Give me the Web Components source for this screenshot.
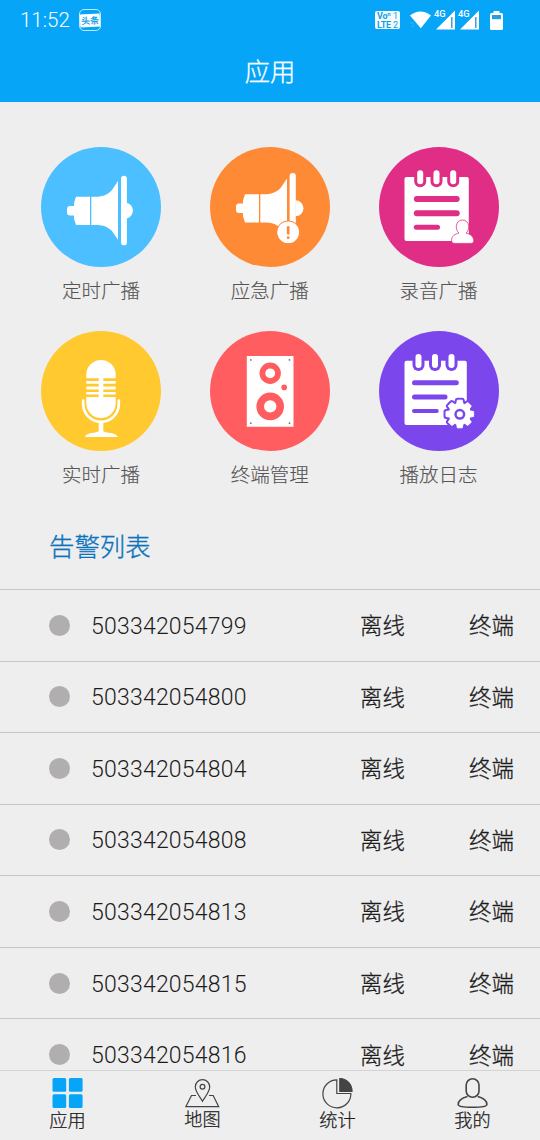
<!DOCTYPE html>
<html lang="zh-CN">
<head>
<meta charset="utf-8">
<title>应用</title>
<style>
html,body{margin:0;height:100%}
body{background:#efeeef;overflow:hidden;font-family:Roboto,"Noto Sans CJK SC",sans-serif;font-weight:300}
</style>
</head>
<body>
<broadcast-app></broadcast-app>
<script>
const define = (name, html, setup) => customElements.define(name, class extends HTMLElement {
  constructor() {
    super();
    const t = document.createElement('template');
    t.innerHTML = html;
    this.attachShadow({mode: 'open'}).append(t.content.cloneNode(true));
  }
  connectedCallback() { if (setup) setup(this, this.shadowRoot); }
});

const horn = `<path d="M35 49.7H49V78H35L33 71.5V68.5H29Q26 68.5 26 65.5V62Q26 59 29 59H33V56Z"/>
<path d="M50.3 49.7H57Q66 49 71 43L77 34V92.7L71 84Q65 78 57 78H50.3Z"/>`;
const rings = (xs, y) => xs.map(x =>
  `<rect x="${x-6}" y="${y-3}" width="12" height="20" rx="6" fill="var(--c)"/><rect x="${x-3}" y="${y}" width="6" height="14" rx="3"/>`).join('');
const rule = (x1, x2, y, w) => `<path d="M${x1+w/2} ${y}H${x2-w/2}" stroke="var(--c)" stroke-width="${w}" stroke-linecap="round"/>`;
const gearPath = (() => {
  let d = '';
  for (let i = 0; i < 8; i++) {
    [[-17,10.6],[-10,14],[10,14],[17,10.6]].forEach(([o, r], k) => {
      const a = (i*45 + o - 90) * Math.PI/180;
      d += (i||k ? 'L' : 'M') + (80.8 + r*Math.cos(a)).toFixed(2) + ' ' + (83 + r*Math.sin(a)).toFixed(2);
    });
  }
  return d + 'Z';
})();

const art = {
  timed: horn + `<rect x="80" y="28.7" width="5.9" height="69.6" rx="2.9"/><path d="M85.5 55.7A8.2 8.2 0 0 1 85.5 71.7Z"/>`,
  urgent: `<g transform="translate(0 -2.4)">${horn}<rect x="79.6" y="28.3" width="6.2" height="66" rx="3"/><path d="M85.5 55.7A8 8 0 0 1 85.5 71.7Z"/></g>
    <circle cx="78.2" cy="85.3" r="11.8" fill="var(--c)"/><circle cx="78.2" cy="85.3" r="10.9"/>
    <path d="M78.2 80.3V86.3" stroke="var(--c)" stroke-width="2.7" stroke-linecap="round"/><circle cx="78.2" cy="90.7" r="1.4" fill="var(--c)"/>
    <path d="M76 96.5H88V100H76Z" fill="var(--c)"/>`,
  record: `<rect x="25.5" y="30" width="64.3" height="64" rx="2"/>${rings([41.2,57.5,74.2],23.3)}
    ${rule(34.8,80.7,52,6)}${rule(34.8,80.7,66.3,6)}${rule(34.8,61,80.2,5)}
    <path d="M72.5 94C72.5 88.5 76 87.3 80 86C75.5 82.5 76.5 73 83.5 73S91.5 82.5 87 86C92 87.3 94.8 90 94.8 94Q94.8 96.4 92 96.4H75Q72.5 96.4 72.5 94Z" stroke="var(--c)" stroke-width=".8"/>`,
  live: `<path d="M45.3 47.3V43.7A14.7 14.7 0 0 1 74.7 43.7V47.3ZM45.3 66H74.7V72.3A14.7 14.7 0 0 1 45.3 72.3Z"/>
    <path d="M57.7 47H62.3V66H57.7ZM45.3 50H74.7V52.8H45.3ZM45.3 55.6H74.7V58.4H45.3ZM45.3 61H74.7V63.4H45.3Z"/>
    <path d="M42.2 69.5V73A17.8 17.8 0 0 0 77.8 73V69.5" fill="none" stroke="#fff" stroke-width="2.7" stroke-linecap="round"/>
    <path d="M57.7 91H62.3V100Q63 101.3 68 101.7Q75.5 102.4 76.8 106H43.8Q45 102.4 52 101.7Q57 101.3 57.7 100Z"/>`,
  speaker: `<rect x="36.8" y="25" width="46.7" height="70.8"/><circle cx="60.2" cy="42.3" r="7.8" fill="none" stroke="var(--c)" stroke-width="5.8"/>
    <circle cx="60.2" cy="75.4" r="10" fill="none" stroke="var(--c)" stroke-width="7.6"/><circle cx="74.2" cy="56.4" r="2.8" fill="var(--c)"/>
    <g fill="#9a6870"><circle cx="40.8" cy="28.9" r=".9"/><circle cx="79.5" cy="28.9" r=".9"/><circle cx="40.8" cy="92.2" r=".9"/><circle cx="79.5" cy="92.2" r=".9"/></g>`,
  log: `<rect x="25.5" y="29.7" width="62.3" height="64.3" rx="2"/>${rings([39.5,56,72.5],23)}
    ${rule(33,79.8,51.8,5)}${rule(33,68.5,66,5)}${rule(33,59.8,80,4)}
    <path d="${gearPath}" fill="var(--c)" stroke="var(--c)" stroke-width="5" stroke-linejoin="round"/>
    <path d="${gearPath}" fill="#fff" stroke="#fff" stroke-width="1" stroke-linejoin="round"/>
    <circle cx="80.8" cy="83.3" r="4.3" fill="none" stroke="var(--c)" stroke-width="2.5"/>`
};

define('status-bar', `<style>
:host{display:flex;height:40px;align-items:center;color:#fff;box-sizing:border-box;padding:0 37px 0 20px}
.time{font-size:20.5px;line-height:24px;letter-spacing:0;width:59px}
.news{display:grid;place-items:center;width:20px;height:20px;border:1px solid #bdeaff;border-radius:5px}
.news b{background:#fff;color:#139fe7;font:700 9px/13px "Noto Sans CJK SC",sans-serif;width:20px;height:13px;text-align:center;transform:rotate(-3deg);white-space:nowrap}
.space{flex:1}
.volte{display:grid;grid-template-columns:16px 7px;width:25px;height:18px;box-sizing:border-box;padding:1px 1px 0 2px;background:#f4fdff;color:#139fe7;border-radius:2px;font:700 9px/8px Roboto,sans-serif;margin-right:10px}
.volte i{font-style:normal;font-weight:400}
.volte span{white-space:nowrap;letter-spacing:-.2px}
.volte small{font-size:6px;line-height:4px;vertical-align:3px}
svg{display:block}
.sig{position:relative;width:20px;height:20px;margin-left:4px}
.sig span{position:absolute;left:-1px;top:-1px;font:500 9.3px/10px Roboto,sans-serif}
.bat{margin-left:11px}
</style>
<span class="time">11:52</span><span class="news"><b>头条</b></span><span class="space"></span>
<span class="volte"><span>Vo<small>n</small></span><i>1</i><span>LTE</span><i>2</i></span>
<svg width="21" height="18" viewBox="0 0 21 18"><path d="M0 4.4Q10.5-3.2 21 4.4L10.8 17.3Z" fill="#fff"/><path d="M0 12H3.5M1.5 15H4" stroke="#3db8f7"/></svg>
<span class="sig"><svg width="20" height="20"><path d="M20 .5V19.5H1Z" fill="#fff"/><path d="M16.8 7V18" stroke="#3696cc" stroke-width="1.4"/></svg><span>4G</span></span>
<span class="sig"><svg width="20" height="20"><path d="M20 .5V19.5H1Z" fill="#fff"/><path d="M16.8 7V18" stroke="#3696cc" stroke-width="1.4"/></svg><span>4G</span></span>
<svg class="bat" width="13" height="19"><path d="M3.5 0H9.5V2H11.5Q13 2 13 3.5V17.5Q13 19 11.5 19H1.5Q0 19 0 17.5V3.5Q0 2 1.5 2H3.5Z" fill="#fff"/><rect x="2" y="4" width="9" height="4.2" fill="#259fdf"/></svg>`);

define('title-bar', `<style>
:host{display:block;height:62px;color:#fff;text-align:center;font-size:25.3px;line-height:65px;-webkit-text-stroke:.3px}
</style><slot></slot>`);

define('app-tile', `<style>
:host{display:flex;flex-direction:column;align-items:center;height:184px}
svg{display:block;width:120px;height:120px;flex:none;border-radius:50%;background:var(--c)}
span{font-size:19.5px;line-height:28px;margin-top:11px;color:#555;-webkit-text-stroke:.15px}
</style><svg viewBox="0 0 120 120" fill="#fff"></svg><span><slot></slot></span>`,
(el, root) => {
  el.style.setProperty('--c', el.getAttribute('color'));
  root.querySelector('svg').innerHTML = art[el.getAttribute('icon')];
});

define('tile-grid', `<style>
:host{display:grid;grid-template-columns:repeat(3,168.8px);padding:45px 0 0 16.6px;height:368px}
</style><slot></slot>`);

define('section-title', `<style>
:host{display:block;height:74px;padding:0 0 0 49px;color:#0b74bb;font-size:25.4px;line-height:65px;-webkit-text-stroke:.35px}
</style><slot></slot>`);

define('alarm-row', `<style>
:host{display:grid;grid-template-columns:42px 269px 109px 1fr;align-items:center;height:71.55px;box-sizing:border-box;border-top:1px solid #c6c5c6;padding-left:49px;color:#1c1c1c;font-size:22.4px;line-height:30px;-webkit-text-stroke:.3px}
i{width:21px;height:21px;border-radius:50%;background:#b0aeaf}
span{padding-top:2px}
.id{font-size:23px;letter-spacing:.22px;-webkit-text-stroke:0;padding-top:3px}
</style><i></i><span class="id"><slot></slot></span><span>离线</span><span>终端</span>`);

define('alarm-list', `<style>
:host{display:block;flex:1;min-height:0;overflow:hidden}
</style><slot></slot>`);

const tabArt = {
  apps: `<g fill="#06a5f8"><rect x="2.5" y="1" width="13.7" height="13.7" rx="1.5"/><rect x="18.9" y="1" width="13.7" height="13.7" rx="1.5"/><rect x="2.5" y="17.3" width="13.7" height="13.7" rx="1.5"/><rect x="18.9" y="17.3" width="13.7" height="13.7" rx="1.5"/></g>`,
  map: `<path d="M11 18.5H6.5L.8 29.7H33.7L28.2 18.5H24M17.5 24.3C14.7 19.5 10.3 15 10.3 9.8A7.2 7.2 0 0 1 24.7 9.8C24.7 15 20.3 19.5 17.5 24.3Z"/><circle cx="17.5" cy="9.7" r="2.4"/>`,
  stats: `<path d="M16.8 2.8A14 14 0 1 0 30.9 16.5H16.8Z"/><path d="M19.8 1.5V14.3H32A12.4 12.4 0 0 0 19.8 1.5Z" fill="#444"/>`,
  me: `<rect x="11.2" y="1.7" width="12.8" height="18.6" rx="6.4" stroke-width="1.6"/><path d="M12.5 19.5C6.5 21 3.2 23.7 3.2 27.5Q3.2 30.3 17.5 30.3T31.9 27.5C31.9 23.7 28.5 21 22.7 19.5" stroke-width="1.6"/>`
};
define('tab-item', `<style>
:host{display:flex;flex-direction:column;align-items:center;padding-top:6px;color:#1c1c1c;font-size:18.2px;line-height:24px;-webkit-text-stroke:.25px}
svg{display:block;width:36px;height:32px}
:host([icon=map]) span{margin-top:-1px}
</style><svg viewBox="0 0 36 32" fill="none" stroke-width="1.2"></svg><span><slot></slot></span>`,
(el, root) => {
  const svg = root.querySelector('svg'), k = el.getAttribute('icon');
  if (k !== 'apps') svg.setAttribute('stroke', '#444');
  svg.innerHTML = tabArt[k];
});
define('tab-bar', `<style>
:host{display:grid;grid-template-columns:repeat(4,1fr);height:70px;box-sizing:border-box;border-top:1px solid #d3d3d4;background:#efeeef}
</style><slot></slot>`);

define('broadcast-app', `<style>
:host{display:flex;flex-direction:column;width:540px;height:1140px;overflow:hidden;background:#efeeef}
header{background:#06a5f8;height:102px;flex:none}
tile-grid,section-title,tab-bar{flex:none}
</style>
<header><status-bar></status-bar><title-bar>应用</title-bar></header>
<tile-grid>
<app-tile icon="timed" color="#4bbfff">定时广播</app-tile>
<app-tile icon="urgent" color="#ff8a35">应急广播</app-tile>
<app-tile icon="record" color="#e02e87">录音广播</app-tile>
<app-tile icon="live" color="#ffc92f">实时广播</app-tile>
<app-tile icon="speaker" color="#ff5d60">终端管理</app-tile>
<app-tile icon="log" color="#7b47ec">播放日志</app-tile>
</tile-grid>
<section-title>告警列表</section-title>
<alarm-list>
<alarm-row>503342054799</alarm-row><alarm-row>503342054800</alarm-row><alarm-row>503342054804</alarm-row>
<alarm-row>503342054808</alarm-row><alarm-row>503342054813</alarm-row><alarm-row>503342054815</alarm-row>
<alarm-row>503342054816</alarm-row>
</alarm-list>
<tab-bar><tab-item icon="apps">应用</tab-item><tab-item icon="map">地图</tab-item><tab-item icon="stats">统计</tab-item><tab-item icon="me">我的</tab-item></tab-bar>`);
</script>
</body>
</html>
